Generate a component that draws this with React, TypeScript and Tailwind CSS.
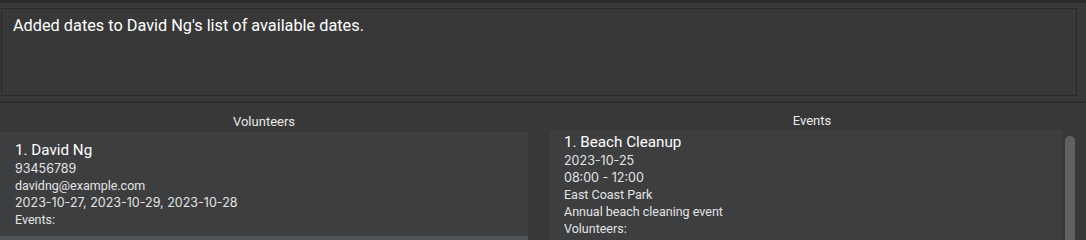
import React from "react";

const num = { fontFamily: "Inter, Roboto, sans-serif" };

export default function App() {
  const font = { fontFamily: "Roboto, 'Open Sans', sans-serif" };
  return (
    <div className="w-[1086px] h-[240px] overflow-hidden bg-[#383838] flex flex-col" style={font}>
      <div className="h-[3px] bg-[#2b2b2b] shrink-0" />
      <div className="pt-[5px] pl-[1px] pr-[9px] shrink-0">
        <div className="h-[88px] border border-[#2a2a2a] bg-[#383838] px-[11px] pt-[7px] text-[16.3px] leading-[20px] text-white">
          Added dates to David Ng's list of available dates.
        </div>
      </div>
      <div className="h-[5px] shrink-0" />
      <div className="h-[2px] bg-[#2b2b2b] shrink-0" />
      <div className="flex flex-1 min-h-0">
        <div className="w-[528px] flex flex-col shrink-0">
          <div className="h-[29px] flex items-center justify-center pt-[9px] text-[13px] text-[#e8e8e8]">Volunteers</div>
          <div className="flex-1 flex flex-col">
            <div className="bg-[#3d3e40] h-[104px] pl-[15px] pt-[8px] shrink-0">
              <div className="text-[15.2px] leading-[20px] text-white">1. David Ng</div>
              <div className="text-[12.5px] leading-[17px] text-[#e4e4e4]">
                <div style={num}>93456789</div>
                <div>davidng@example.com</div>
                <div style={num}>2023-10-27, 2023-10-29, 2023-10-28</div>
                <div>Events:</div>
              </div>
            </div>
            <div className="bg-[#4e5355] flex-1" />
          </div>
        </div>
        <div className="w-[21px] shrink-0" />
        <div className="w-[526px] flex flex-col shrink-0">
          <div className="h-[27px] flex items-center justify-center pt-[9px] text-[13px] text-[#e8e8e8]">Events</div>
          <div className="flex flex-1">
            <div className="w-[513px] bg-[#3d3e40] pl-[15px] pt-[2px]">
              <div className="text-[15.2px] leading-[20px] text-white">1. Beach Cleanup</div>
              <div className="text-[12.5px] leading-[17px] text-[#e4e4e4]">
                <div style={num}>2023-10-25</div>
                <div style={num}>08:00 - 12:00</div>
                <div>East Coast Park</div>
                <div>Annual beach cleaning event</div>
                <div>Volunteers:</div>
              </div>
            </div>
            <div className="w-[3px]" />
            <div className="pt-[6px]">
              <div className="w-[10px] h-[200px] rounded-[5px] bg-[#606060]" />
            </div>
          </div>
        </div>
      </div>
    </div>
  );
}
